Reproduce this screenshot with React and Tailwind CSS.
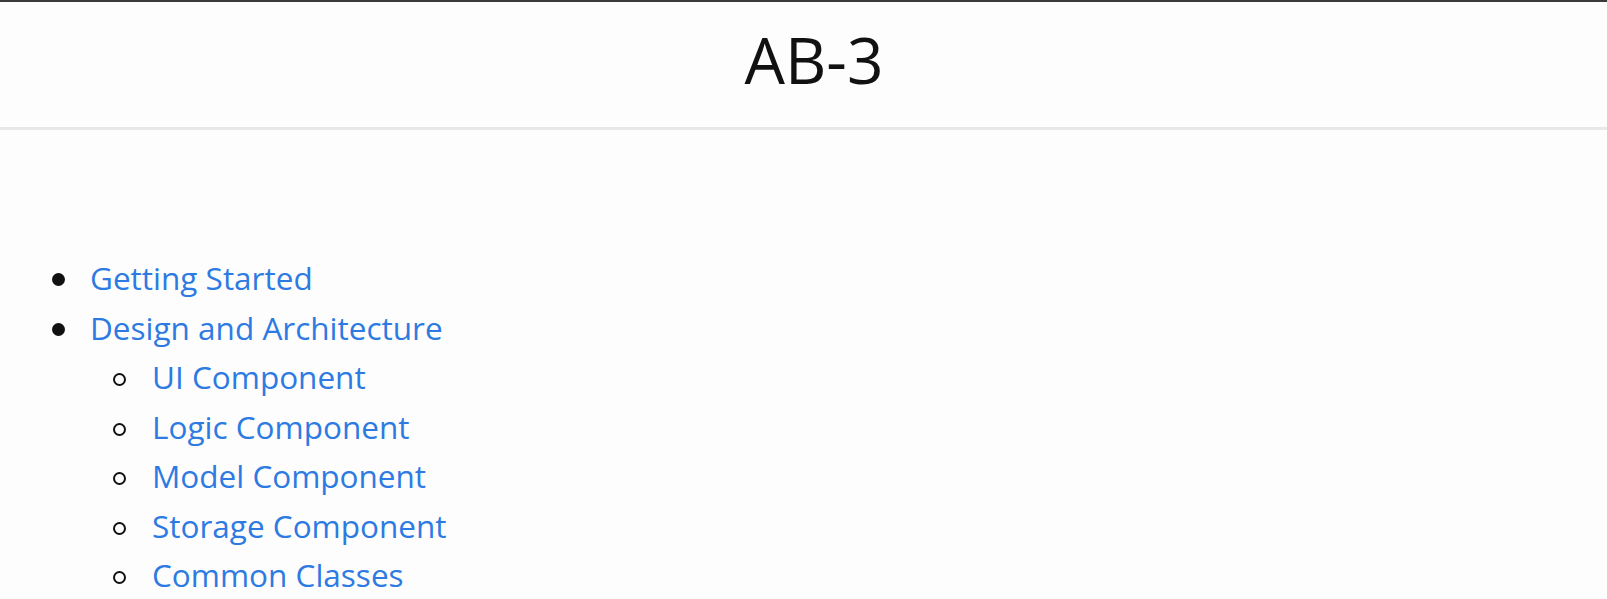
import React from "react";

const subItems = [
  "UI Component",
  "Logic Component",
  "Model Component",
  "Storage Component",
  "Common Classes",
];

const linkClass = "text-[#2d7be2]";

const Disc = () => (
  <span className="flex w-[38px] shrink-0 items-start pt-[20px]">
    <span className="size-[13px] rounded-full bg-[#111111]" />
  </span>
);

const Circle = () => (
  <span className="flex w-[39px] shrink-0 items-start pt-[21px]">
    <span className="size-[13px] rounded-full border-2 border-[#111111]" />
  </span>
);

export default function App() {
  return (
    <div
      className="min-h-screen bg-[#fdfdfd] text-[#111111]"
      style={{ fontFamily: '"Open Sans", "Noto Sans", sans-serif' }}
    >
      <header className="h-[130px] border-t-2 border-b-[3px] border-t-[#3a3a3a] border-b-[#e8e8e8] pt-[26px] pl-[21px] text-center">
        <h1 className="text-[64px] leading-[63px]">AB-3</h1>
      </header>

      <main className="pt-[123px]">
        <ul className="pl-[52px] text-[31.5px] leading-[49.5px]">
          <li className="flex">
            <Disc />
            <a href="#" className={linkClass}>Getting Started</a>
          </li>
          <li>
            <div className="flex">
              <Disc />
              <a href="#" className={linkClass}>Design and Architecture</a>
            </div>
            <ul className="pl-[61px]">
              {subItems.map((item) => (
                <li key={item} className="flex">
                  <Circle />
                  <a href="#" className={linkClass}>{item}</a>
                </li>
              ))}
            </ul>
          </li>
        </ul>
      </main>
    </div>
  );
}
